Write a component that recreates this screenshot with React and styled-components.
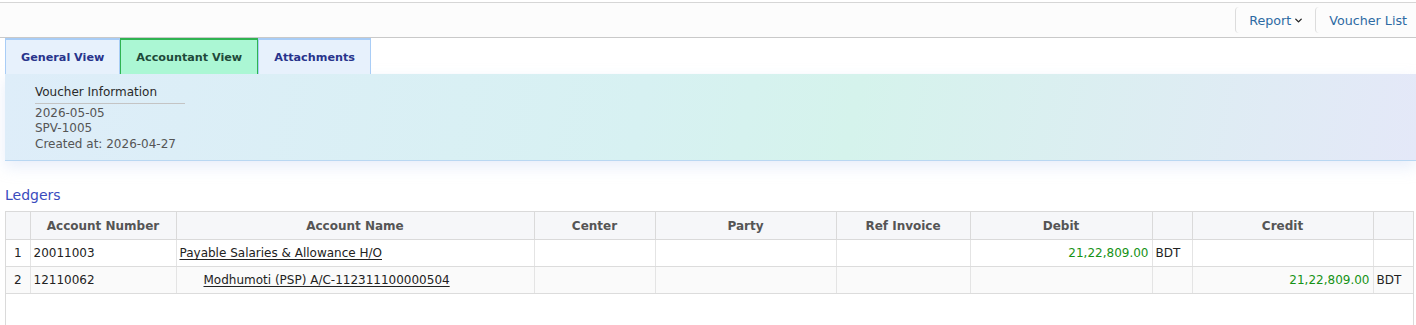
import React from "react";
import styled, { createGlobalStyle } from "styled-components";
import { ChevronDown } from "lucide-react";

const GlobalStyle = createGlobalStyle`
    body {
        margin: 0;
        background: #ffffff;
        font-family: "DejaVu Sans", "Liberation Sans", sans-serif;
        font-size: 12px;
        color: #333;
    }
`;

const Page = styled.div`
    padding-top: 2px;
`;

const TopBar = styled.div`
    display: flex;
    justify-content: flex-end;
    align-items: center;
    height: 34px;
    background: #fcfcfc;
    border-top: 1px solid #d6d6d6;
    border-bottom: 1px solid #c9c9c9;
`;

const NavItem = styled.a`
    display: flex;
    align-items: center;
    gap: 2px;
    height: 26px;
    padding: 0 ${(p) => (p.$last ? "9px" : "11px")} 0 13px;
    border-left: 1px solid #dcdcdc;
    border-radius: 4px 0 0 4px;
    color: #2d6aa3;
    font-size: 12.7px;
    cursor: pointer;
`;

const Content = styled.div`
    padding-left: 5px;
`;

const Tabs = styled.div`
    display: flex;
    height: 36px;
`;

const Tab = styled.div`
    display: flex;
    align-items: center;
    padding: 0 15px;
    font-weight: bold;
    font-size: 11.2px;
    border: 1px solid ${(p) => (p.$active ? "#2fb352" : "#a9cdf6")};
    border-top-width: 2px;
    border-bottom: none;
    background: ${(p) => (p.$active ? "#abf7d4" : "#e7f1fc")};
    color: ${(p) => (p.$active ? "#1e4a3a" : "#28348c")};
`;

const InfoPanel = styled.div`
    box-sizing: border-box;
    height: 87px;
    padding: 11px 30px 0;
    background: linear-gradient(100deg, #deedf9 0%, #d7f1f2 45%, #d5f3ec 60%, #e4e8f8 100%);
    border-bottom: 1px solid #b9d7f2;
    box-shadow: 0 6px 14px rgba(190, 205, 240, 0.35);
`;

const InfoBox = styled.div`
    width: 150px;
    line-height: 15.5px;
    color: #555;
`;

const InfoTitle = styled.div`
    color: #2a2a2a;
    padding-bottom: 2px;
    margin-bottom: 2px;
    border-bottom: 1px solid #c4c4c4;
`;

const SectionTitle = styled.div`
    margin-top: 26px;
    height: 24px;
    font-size: 14px;
    color: #3a4bbd;
`;

const TableWrap = styled.div`
    margin-right: 2px;
    height: 120px;
    border: 1px solid #dadada;
    border-bottom: none;
`;

const Table = styled.table`
    width: 100%;
    border-collapse: collapse;
    table-layout: fixed;
`;

const Th = styled.th`
    height: 27px;
    padding: 0 4px;
    background: #f6f7f9;
    color: #555;
    font-size: 12px;
    font-weight: bold;
    text-align: center;
    border-right: 1px solid #dadada;
    border-bottom: 1px solid #dadada;
    &:last-child {
        border-right: none;
    }
`;

const Row = styled.tr`
    background: ${(p) => (p.$alt ? "#fafafa" : "#ffffff")};
`;

const Td = styled.td`
    height: 26px;
    padding: 0 3px;
    font-size: 12px;
    color: #222;
    text-align: ${(p) => p.$align || "left"};
    border-right: 1px solid #e4e4e4;
    border-bottom: 1px solid #dcdcdc;
    white-space: nowrap;
    &:last-child {
        border-right: none;
    }
`;

const Amount = styled.span`
    color: #169216;
`;

const AccountLink = styled.span`
    display: inline-block;
    padding-left: ${(p) => (p.$indent ? "24px" : "0")};
    text-decoration: underline;
    text-underline-offset: 2px;
    cursor: pointer;
`;

const columns = [
    { key: "idx", label: "", width: 24 },
    { key: "number", label: "Account Number", width: 146 },
    { key: "name", label: "Account Name", width: 358 },
    { key: "center", label: "Center", width: 121 },
    { key: "party", label: "Party", width: 181 },
    { key: "ref", label: "Ref Invoice", width: 134 },
    { key: "debit", label: "Debit", width: 182 },
    { key: "debitCur", label: "", width: 40 },
    { key: "credit", label: "Credit", width: 181 },
    { key: "creditCur", label: "", width: 40 },
];

const ledgers = [
    {
        number: "20011003",
        name: "Payable Salaries & Allowance H/O",
        debit: "21,22,809.00",
        credit: "",
        indent: false,
    },
    {
        number: "12110062",
        name: "Modhumoti (PSP) A/C-112311100000504",
        debit: "",
        credit: "21,22,809.00",
        indent: true,
    },
];

function App() {
    return (
        <Page>
            <GlobalStyle />
            <TopBar>
                <NavItem>
                    Report <ChevronDown size={11} strokeWidth={3} color="#222" />
                </NavItem>
                <NavItem $last>Voucher List</NavItem>
            </TopBar>
            <Content>
                <Tabs>
                    <Tab>General View</Tab>
                    <Tab $active>Accountant View</Tab>
                    <Tab>Attachments</Tab>
                </Tabs>
                <InfoPanel>
                    <InfoBox>
                        <InfoTitle>Voucher Information</InfoTitle>
                        <div>2026-05-05</div>
                        <div>SPV-1005</div>
                        <div>Created at: 2026-04-27</div>
                    </InfoBox>
                </InfoPanel>
                <SectionTitle>Ledgers</SectionTitle>
                <TableWrap>
                    <Table>
                        <colgroup>
                            {columns.map((c) => (
                                <col key={c.key} style={{ width: c.width }} />
                            ))}
                        </colgroup>
                        <thead>
                            <tr>
                                {columns.map((c) => (
                                    <Th key={c.key}>{c.label}</Th>
                                ))}
                            </tr>
                        </thead>
                        <tbody>
                            {ledgers.map((l, i) => (
                                <Row key={l.number} $alt={i % 2 === 1}>
                                    <Td $align="center">{i + 1}</Td>
                                    <Td>{l.number}</Td>
                                    <Td>
                                        <AccountLink $indent={l.indent}>
                                            {l.name}
                                        </AccountLink>
                                    </Td>
                                    <Td />
                                    <Td />
                                    <Td />
                                    <Td $align="right">
                                        <Amount>{l.debit}</Amount>
                                    </Td>
                                    <Td>{l.debit ? "BDT" : ""}</Td>
                                    <Td $align="right">
                                        <Amount>{l.credit}</Amount>
                                    </Td>
                                    <Td>{l.credit ? "BDT" : ""}</Td>
                                </Row>
                            ))}
                        </tbody>
                    </Table>
                </TableWrap>
            </Content>
        </Page>
    );
}

export default App;
